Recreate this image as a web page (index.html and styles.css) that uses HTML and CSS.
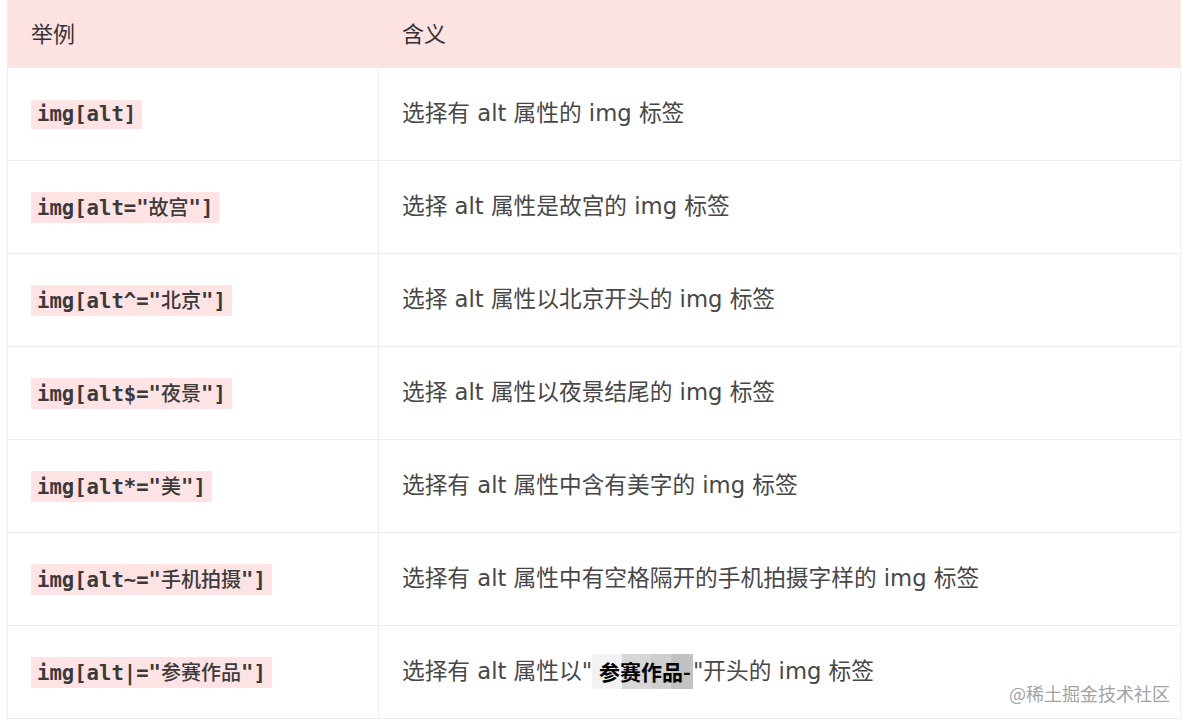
FILE: index.html
```html
<!DOCTYPE html>
<html lang="zh-CN">
<head>
<meta charset="utf-8">
<title>属性选择器</title>
<link rel="stylesheet" href="styles.css">
</head>
<body>
<div class="page">
  <div class="table">
    <div class="th first">举例</div>
    <div class="th">含义</div>

    <div class="td first"><code class="code">img[alt]</code></div>
    <div class="td">选择有 alt 属性的 img 标签</div>

    <div class="td first"><code class="code">img[alt="<span class="zh">故宫</span>"]</code></div>
    <div class="td">选择 alt 属性是故宫的 img 标签</div>

    <div class="td first"><code class="code">img[alt^="<span class="zh">北京</span>"]</code></div>
    <div class="td">选择 alt 属性以北京开头的 img 标签</div>

    <div class="td first"><code class="code">img[alt$="<span class="zh">夜景</span>"]</code></div>
    <div class="td">选择 alt 属性以夜景结尾的 img 标签</div>

    <div class="td first"><code class="code">img[alt*="<span class="zh">美</span>"]</code></div>
    <div class="td">选择有 alt 属性中含有美字的 img 标签</div>

    <div class="td first"><code class="code">img[alt~="<span class="zh">手机拍摄</span>"]</code></div>
    <div class="td">选择有 alt 属性中有空格隔开的手机拍摄字样的 img 标签</div>

    <div class="td first"><code class="code">img[alt|="<span class="zh">参赛作品</span>"]</code></div>
    <div class="td">选择有 alt 属性以"<span class="pasted">参赛作品-</span> "开头的 img 标签</div>
  </div>
  <div class="watermark">@稀土掘金技术社区</div>
</div>
</body>
</html>
```

FILE: styles.css
```css
html, body {
  margin: 0;
  padding: 0;
  background: #ffffff;
}

.page {
  position: relative;
  width: 1191px;
  height: 726px;
  overflow: hidden;
  font-family: "DejaVu Sans", "Noto Sans CJK SC", sans-serif;
}

.table {
  display: grid;
  grid-template-columns: 371px 1fr;
  width: 1174px;
  margin-left: 7px;
  box-sizing: border-box;
  border-left: 1px solid #efefef;
  border-right: 1px solid #efefef;
}

.th {
  height: 68px;
  background: #fde2e2;
  display: flex;
  align-items: center;
  padding-left: 23px;
  padding-bottom: 5px;
  box-sizing: border-box;
  font-family: "Noto Sans CJK SC", sans-serif;
  font-size: 22px;
  line-height: 30px;
  color: #333333;
}

.td {
  height: 93px;
  box-sizing: border-box;
  border-bottom: 1px solid #eeeeee;
  display: flex;
  align-items: center;
  padding-left: 23px;
  padding-bottom: 2px;
  font-size: 22.7px;
  line-height: 30px;
  color: #474747;
  white-space: nowrap;
}

.td.first {
  border-right: 1px solid #eeeeee;
  padding-bottom: 0;
}

.code {
  display: inline-block;
  padding: 2px 6px;
  background: #fde3e3;
  font-family: "DejaVu Sans Mono", "Noto Sans CJK SC", monospace;
  font-weight: bold;
  font-size: 20.6px;
  line-height: 25px;
  color: #3a3a3a;
}

.code .zh {
  font-family: "Noto Sans CJK SC", sans-serif;
  font-weight: 500;
  font-size: 20px;
}

.pasted {
  display: inline-block;
  padding: 2px 2px 2px 7px;
  font-family: "Noto Sans CJK SC", sans-serif;
  font-weight: bold;
  font-size: 21px;
  line-height: 31px;
  color: #000000;
  background: linear-gradient(90deg, #f2f2f2 0 30%, #d7d7d7 30% 58%, #cfcfcf 58% 78%, #c2c2c2 78% 100%);
}

.watermark {
  position: absolute;
  left: 1009px;
  top: 681px;
  font-family: "Noto Sans CJK SC", sans-serif;
  font-size: 18px;
  line-height: 24px;
  color: #a3a3a3;
  text-shadow: 0 0 2px #ffffff;
}
```
